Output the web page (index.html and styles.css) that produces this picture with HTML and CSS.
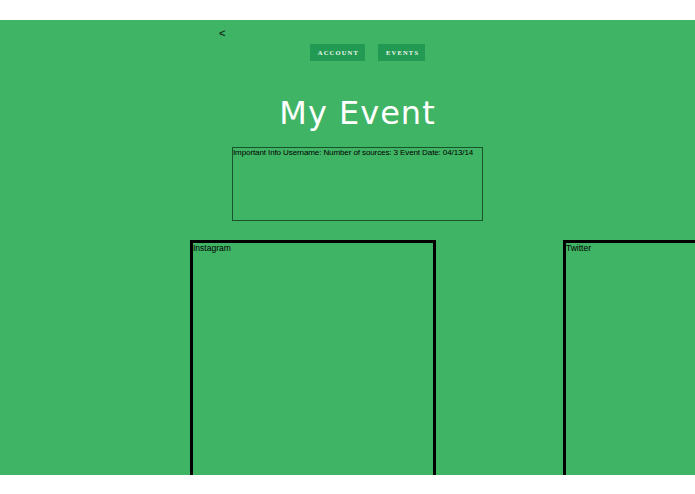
FILE: index.html
```html
<!DOCTYPE html>
<html lang="en">
<head>
  <meta charset="UTF-8" />
  <meta name="viewport" content="width=device-width, initial-scale=1.0" />
  <title>My Event</title>
  <link rel="stylesheet" href="styles.css">
</head>
<body>
  <div class="page">
    <a class="back" href="#">&lt;</a>

    <nav class="top-nav">
      <a class="nav-btn" href="#">Account</a>
      <a class="nav-btn" href="#">Events</a>
    </nav>

    <h1 class="event-title">My Event</h1>

    <div class="info-box">
      Important Info Username: Number of sources: 3 Event Date: 04/13/14
    </div>

    <div class="feeds">
      <div class="feed">Instagram</div>
      <div class="feed">Twitter</div>
    </div>
  </div>
</body>
</html>
```

FILE: styles.css
```css
* {
  box-sizing: border-box;
}

html, body {
  margin: 0;
  padding: 0;
  background: #fff;
}

.page {
  margin-top: 20px;
  height: 455px;
  overflow: hidden;
  background-color: #40b465;
  font-family: 'Liberation Sans', Arial, sans-serif;
  color: #000;
}

.back {
  display: block;
  padding: 7px 0 0 219px;
  height: 24px;
  font-size: 11px;
  font-weight: 700;
  line-height: 12px;
  color: #143a1f;
  text-decoration: none;
}

.top-nav {
  display: flex;
  justify-content: center;
  gap: 13px;
  padding-left: 40px;
}

.nav-btn {
  display: block;
  height: 17px;
  padding: 0 6px 0 8px;
  background-color: #239a54;
  color: #eef8f1;
  font-family: 'Liberation Serif', 'Times New Roman', serif;
  font-weight: 700;
  font-size: 6.5px;
  line-height: 17px;
  letter-spacing: 1.2px;
  text-transform: uppercase;
  text-decoration: none;
}

.event-title {
  margin: 32px 0 0 20px;
  text-align: center;
  font-family: 'DejaVu Sans', Verdana, sans-serif;
  font-weight: 400;
  font-size: 32px;
  letter-spacing: 1px;
  line-height: 40px;
  color: #fff;
}

.info-box {
  width: 251px;
  height: 74px;
  margin: 14px 0 0 232px;
  border: 1px solid #17532b;
  font-size: 8px;
  line-height: 9px;
  letter-spacing: -0.1px;
}

.feeds {
  display: flex;
  gap: 127px;
  margin: 19px 0 0 190px;
}

.feed {
  flex: 0 0 246px;
  height: 260px;
  border: 3px solid #000;
  font-size: 8.5px;
  line-height: 10px;
}
```
